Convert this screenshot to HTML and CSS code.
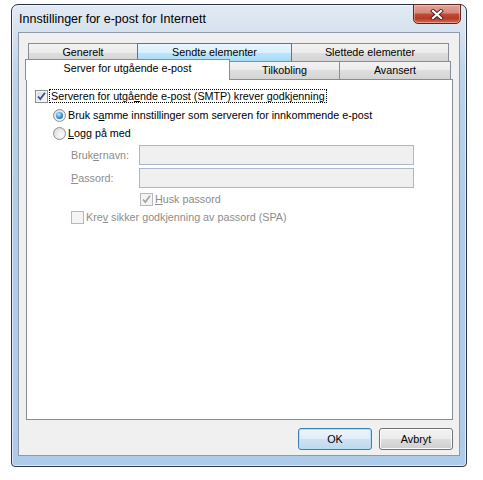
FILE: index.html
```html
<!DOCTYPE html>
<html lang="no">
<head>
  <meta charset="UTF-8" />
  <meta name="viewport" content="width=device-width, initial-scale=1.0"/>
  <title>Innstillinger for e-post for Internett</title>
  <link rel="stylesheet" href="styles.css">
</head>
<body>
  <div class="window">
    <!-- Title bar -->
    <div class="titlebar">
      <span class="title">Innstillinger for e-post for Internett</span>
      <div class="close">
        <svg width="14" height="11" viewBox="0 0 14 11">
          <path d="M3 2 L11 9 M11 2 L3 9" stroke="#4a2420" stroke-width="4" stroke-linecap="square"/>
          <path d="M3 2 L11 9 M11 2 L3 9" stroke="#fff" stroke-width="2.2" stroke-linecap="square"/>
        </svg>
      </div>
    </div>

    <div class="client">
      <!-- Tabs -->
      <div class="tabs">
        <div class="tab-row back">
          <div class="tab t-gen">Generelt</div>
          <div class="tab t-sendt hover">Sendte elementer</div>
          <div class="tab t-slett">Slettede elementer</div>
        </div>
        <div class="tab-row front">
          <div class="tab t-server selected">Server for utgående e-post</div>
          <div class="tab t-tilk">Tilkobling</div>
          <div class="tab t-avan">Avansert</div>
        </div>
      </div>

      <div class="panel">
        <div class="row">
          <span class="chk">
            <svg width="11" height="11" viewBox="0 0 11 11"><path d="M2 5.5 L4.3 8 L9 1.8" fill="none" stroke="#3a4f8e" stroke-width="1.8"/></svg>
          </span>
          <span class="focus">Serveren for utgå<u>e</u>nde e-post (SMTP) krever godkjenning</span>
        </div>

        <div class="row opt first">
          <span class="radio on"></span>
          <span class="lbl">Bruk s<u>a</u>mme innstillinger som serveren for innkommende e-post</span>
        </div>
        <div class="row opt">
          <span class="radio"></span>
          <span class="lbl"><u>L</u>ogg på med</span>
        </div>

        <div class="field first">
          <span class="field-label">Bruk<u>e</u>rnavn:</span>
          <span class="input"></span>
        </div>
        <div class="field">
          <span class="field-label"><u>P</u>assord:</span>
          <span class="input"></span>
        </div>

        <div class="row husk">
          <span class="chk disabled">
            <svg width="11" height="11" viewBox="0 0 11 11"><path d="M2 5.5 L4.3 8 L9 1.8" fill="none" stroke="#a6a6a6" stroke-width="1.8"/></svg>
          </span>
          <span class="lbl grey"><u>H</u>usk passord</span>
        </div>
        <div class="row krev">
          <span class="chk disabled"></span>
          <span class="lbl grey">Kre<u>v</u> sikker godkjenning av passord (SPA)</span>
        </div>
      </div>

      <div class="buttons">
        <button class="btn default">OK</button>
        <button class="btn">Avbryt</button>
      </div>
    </div>
  </div>
</body>
</html>
```

FILE: styles.css
```css
* {
  box-sizing: border-box;
  margin: 0;
  padding: 0;
}
body {
  background: #fff;
  color: #000;
  font-family: "Liberation Sans", Arial, sans-serif;
  font-size: 10.75px;
}

/* Aero window frame */
.window {
  margin: 4px 0 0 11px;
  width: 456px;
  height: 463px;
  border: 1px solid #2a3646;
  border-radius: 7px 7px 4px 4px;
  padding: 0 6px 10px 6px;
  background: linear-gradient(to bottom, #e2eaf3 0, #d6e2ef 26px, #bcd4ec 70px, #afcce9 200px, #aecbe9 100%);
  box-shadow: inset 0 0 0 1px rgba(255, 255, 255, 0.6);
}
.titlebar {
  display: flex;
  justify-content: space-between;
  align-items: flex-start;
  height: 27px;
  margin: 0 -6px;
  padding: 0 5px 0 7px;
}
.title {
  align-self: center;
  font-size: 12.5px;
  color: #000;
}
.close {
  width: 48px;
  height: 20px;
  margin-top: -1px;
  display: flex;
  align-items: center;
  justify-content: center;
  border: 1px solid #5b2520;
  border-radius: 0 0 5px 5px;
  background: linear-gradient(to bottom, #e4a397 0%, #d3897c 45%, #c04a36 50%, #b73b26 75%, #d06d55 100%);
  box-shadow: inset 0 0 0 1px rgba(255, 220, 210, 0.45);
}

/* Client area */
.client {
  height: 424px;
  border: 1px solid #8e9aa8;
  background: #f0f0f0;
  padding: 10px 6px 5px 7px;
}

/* Tabs */
.tab-row {
  display: flex;
  height: 18px;
}
.tab-row.back {
  margin: 0 2px;
}
.tab {
  height: 18px;
  border: 1px solid #898c95;
  border-bottom: none;
  background: linear-gradient(to bottom, #f3f3f3 0%, #ebebeb 50%, #dedede 50%, #d4d4d4 100%);
  text-align: center;
  line-height: 17px;
  white-space: nowrap;
}
.tab + .tab {
  margin-left: -1px;
}
.tab.hover {
  border-color: #3c7fb1;
  background: linear-gradient(to bottom, #eaf6fd 0%, #d9f0fc 50%, #bee6fd 50%, #a7d9f5 100%);
  position: relative;
}
.t-gen { width: 110px; }
.t-sendt { width: 155px; }
.t-slett { width: 158px; }
.t-server { width: 205px; }
.t-tilk { width: 111px; }
.t-avan { width: 112px; }
.tab.selected {
  position: relative;
  z-index: 2;
  margin-left: -1px;
  margin-top: -2px;
  height: 21px;
  background: #fff;
  line-height: 17px;
}

.panel {
  height: 341px;
  border: 1px solid #898c95;
  background: #fff;
  padding: 9px 0 0 8px;
}

/* Rows */
.row {
  display: flex;
  align-items: center;
  height: 14px;
}
.opt {
  margin-left: 18px;
  margin-top: 4px;
}
.opt.first {
  margin-top: 5px;
}
.lbl {
  margin-left: 2px;
  line-height: 14px;
}
.grey {
  color: #8c8c8c;
}
.focus {
  margin-left: 1px;
  padding: 0 1px;
  border: 1px dotted #000;
  line-height: 12px;
  height: 14px;
}

.chk {
  width: 13px;
  height: 13px;
  flex: none;
  border: 1px solid #8e8f8f;
  background: linear-gradient(135deg, #d3d6db 0%, #eeeff0 60%, #f8f8f8 100%);
  box-shadow: inset 0 0 0 1px #f4f4f4;
}
.chk svg {
  display: block;
}
.chk.disabled {
  border-color: #b8b8b8;
  background: #f4f4f4;
  box-shadow: none;
}
.radio {
  width: 13px;
  height: 13px;
  flex: none;
  border: 1px solid #8e8f8f;
  border-radius: 50%;
  background: radial-gradient(circle at 65% 65%, #fbfbfb 0%, #e8e8e8 55%, #c9cbce 100%);
  display: flex;
  align-items: center;
  justify-content: center;
}
.radio.on::after {
  content: "";
  width: 7px;
  height: 7px;
  border-radius: 50%;
  background: radial-gradient(circle at 40% 35%, #c4ecff 0%, #4eabe9 40%, #15559c 85%, #0c3f7a 100%);
}

/* Text fields */
.field {
  display: flex;
  align-items: center;
  height: 20px;
  margin: 3px 0 0 36px;
}
.field.first {
  margin-top: 5px;
}
.field-label {
  width: 68px;
  color: #8c8c8c;
}
.input {
  width: 275px;
  height: 20px;
  border: 1px solid #aab8c8;
  background: #f0f0f0;
}

.husk {
  margin: 4px 0 0 105px;
}
.krev {
  margin: 4px 0 0 36px;
}

/* Dialog buttons */
.buttons {
  display: flex;
  justify-content: flex-end;
  gap: 7px;
  margin-top: 8px;
}
.btn {
  width: 74px;
  height: 22px;
  border: 1px solid #707070;
  border-radius: 3px;
  font-family: "Liberation Sans", Arial, sans-serif;
  font-size: 10.75px;
  color: #000;
  background: linear-gradient(to bottom, #f2f2f2 0%, #ebebeb 50%, #dddddd 50%, #cfcfcf 100%);
  box-shadow: inset 0 0 0 1px #fcfcfc;
}
.btn.default {
  border-color: #3c7fb1;
  background: linear-gradient(to bottom, #eef5fb 0%, #e0edf8 50%, #cde2f3 50%, #c0d9ee 100%);
  box-shadow: inset 0 0 0 1px #b4e0f7;
}
```
